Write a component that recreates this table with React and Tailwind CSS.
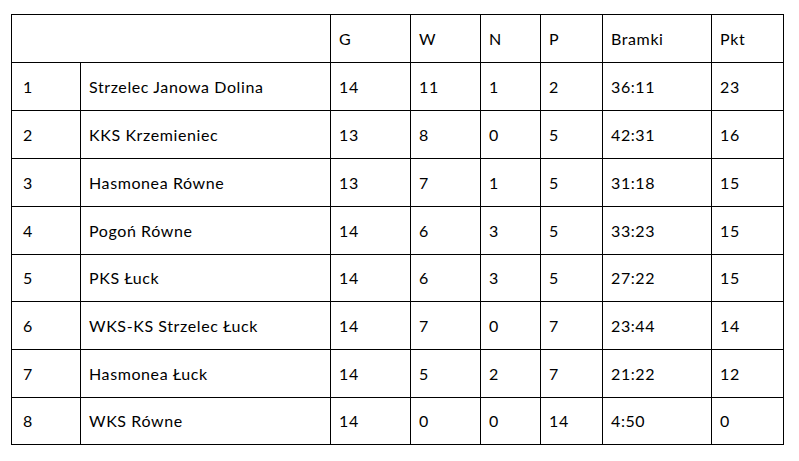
const cols = "grid-cols-[69px_250px_80px_70px_60px_62px_109px_72px]";

const rows = [
  ["1", "Strzelec Janowa Dolina", "14", "11", "1", "2", "36:11", "23"],
  ["2", "KKS Krzemieniec", "13", "8", "0", "5", "42:31", "16"],
  ["3", "Hasmonea Równe", "13", "7", "1", "5", "31:18", "15"],
  ["4", "Pogoń Równe", "14", "6", "3", "5", "33:23", "15"],
  ["5", "PKS Łuck", "14", "6", "3", "5", "27:22", "15"],
  ["6", "WKS-KS Strzelec Łuck", "14", "7", "0", "7", "23:44", "14"],
  ["7", "Hasmonea Łuck", "14", "5", "2", "7", "21:22", "12"],
  ["8", "WKS Równe", "14", "0", "0", "14", "4:50", "0"],
];

// bottom line offsets from the reference: 48,48,48,47,48,48,47,47
const heights = ["h-[48px]", "h-[48px]", "h-[48px]", "h-[48px]", "h-[47px]", "h-[48px]", "h-[48px]", "h-[47px]"];

function Cell({ children, className = "" }) {
  return (
    <div className={`flex items-center border-r border-b border-black pl-[8px] ${className}`}>
      {children}
    </div>
  );
}

export default function App() {
  return (
    <div className="w-[799px] h-[461px] bg-white pt-[14px] pl-[11px] text-black text-[16px] tracking-[0.6px] font-['Lato','Carlito',sans-serif]">
      <div className={`grid ${cols} w-[773px] border-t border-l border-black`}>
        {/* header */}
        <Cell className="col-span-2 h-[48px]" />
        {["G", "W", "N", "P", "Bramki", "Pkt"].map((h) => (
          <Cell key={h} className="h-[48px]">{h}</Cell>
        ))}

        {rows.map((r, i) =>
          r.map((v, j) => (
            <Cell key={i + "-" + j} className={`${heights[i]} ${j === 0 ? "pl-[11px]" : ""}`}>
              {v}
            </Cell>
          ))
        )}
      </div>
    </div>
  );
}
